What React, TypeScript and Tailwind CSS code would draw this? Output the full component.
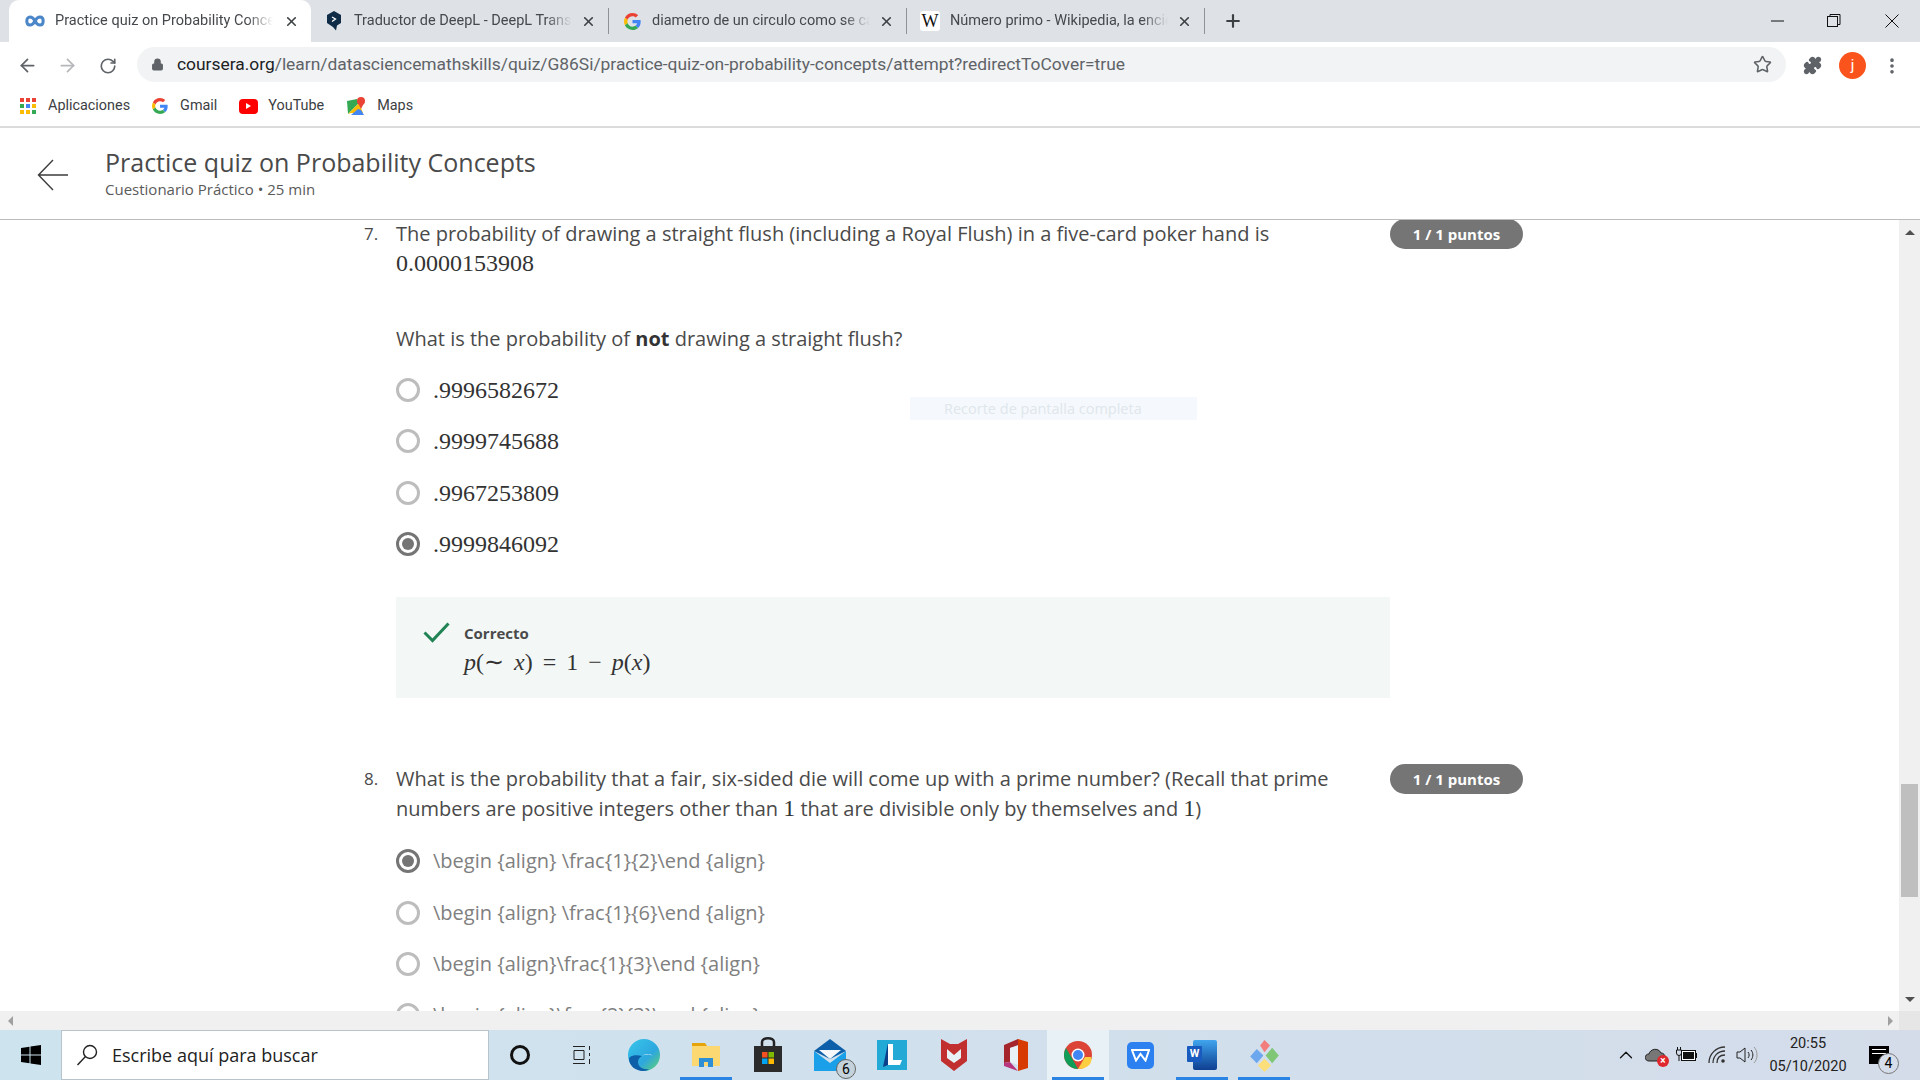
import React from 'react';
import { X, Plus, ArrowLeft, ArrowRight, RotateCw, Lock, Star, Puzzle, MoreVertical, ChevronUp } from 'lucide-react';

const GoogleIcon = ({ size = 16 }: { size?: number }) => (
  <svg width={size} height={size} viewBox="0 0 48 48">
    <path fill="#EA4335" d="M24 9.5c3.5 0 6.7 1.3 9.1 3.5l6.8-6.8C35.8 2.4 30.2 0 24 0 14.6 0 6.5 5.4 2.6 13.2l7.9 6.2C12.4 13.7 17.7 9.5 24 9.5z" />
    <path fill="#4285F4" d="M47 24.5c0-1.6-.2-3.100-.4-4.500H24v9h13c-.6 3-2.300 5.500-4.800 7.200l7.700 6C44.400 38.500 47 32.100 47 24.500z" />
    <path fill="#FBBC05" d="M10.500 28.600c-.5-1.400-.8-3-.8-4.600s.3-3.200.8-4.600l-7.900-6.200C1 16.500 0 20.100 0 24s1 7.500 2.600 10.800l7.900-6.200z" />
    <path fill="#34A853" d="M24 48c6.500 0 11.900-2.100 15.900-5.800l-7.700-6c-2.200 1.400-5 2.300-8.200 2.300-6.300 0-11.600-4.200-13.500-9.900l-7.900 6.200C6.500 42.600 14.600 48 24 48z" />
  </svg>
);

const Tab = ({ title, icon, active }: { title: string; icon: React.ReactNode; active?: boolean }) => (
  <div className={`flex items-center shrink-0 pr-[12px] ${active ? 'h-[42px] w-[302px] pl-[16px] bg-white rounded-t-[10px]' : 'h-[26px] w-[298px] pl-[13px] border-r border-[#8f9398]'}`}>
    <div className="w-[20px] flex items-center justify-center shrink-0">{icon}</div>
    <span className="ml-[10px] w-[218px] whitespace-nowrap overflow-hidden text-[14.5px] text-[#45484c] [mask-image:linear-gradient(to_right,black_88%,transparent)]">{title}</span>
    <X size={15} strokeWidth={2.6} className="ml-auto text-[#3c4043]" />
  </div>
);

const TabStrip = () => (
  <div className="h-[42px] bg-[#dee1e6] flex items-center pl-[9px] shrink-0">
    <Tab
      active
      title="Practice quiz on Probability Concepts"
      icon={
        <svg width="20" height="12" viewBox="0 0 20 12" fill="none" stroke="#4a86c8" strokeWidth="3">
          <path d="M10 6C8.500 3 7 2 5 2 3 2 1.800 3.800 1.800 6S3 10 5 10c2 0 3.500-1 5-4s3-4 5-4 3.200 1.800 3.200 4-1.200 4-3.200 4c-2 0-3.500-1-5-4z" />
        </svg>
      }
    />
    <Tab
      title="Traductor de DeepL - DeepL Translate"
      icon={
        <svg width="16" height="20" viewBox="0 0 16 20">
          <path fill="#0f2b46" d="M8 0l7 4v8l-4 2.500-1 5-3-3.500-6-4V4z" />
          <path d="M6 6l3.500 2L6 10.500" fill="none" stroke="#fff" strokeWidth="1.300" />
        </svg>
      }
    />
    <Tab title="diametro de un circulo como se calcula" icon={<GoogleIcon size={17} />} />
    <Tab
      title="Número primo - Wikipedia, la enciclopedia libre"
      icon={<span className="w-[20px] h-[20px] bg-white rounded-[3px] flex items-center justify-center font-['Liberation_Serif',serif] text-[18px] text-[#111] leading-none">W</span>}
    />
    <Plus size={20} strokeWidth={2.6} className="ml-[18px] text-[#3c4043]" />
    <div className="ml-auto flex items-center h-full text-[#111]">
      <svg width="14" height="14" viewBox="0 0 14 14" className="mr-[42px]"><path d="M0 7h13" stroke="currentColor" /></svg>
      <svg width="14" height="14" viewBox="0 0 14 14" fill="none" stroke="currentColor" className="mr-[44px]">
        <rect x="0.500" y="2.500" width="10" height="10" />
        <path d="M3 2.500V.500h10v10h-2.500" />
      </svg>
      <svg width="14" height="14" viewBox="0 0 14 14" className="mr-[21px]"><path d="M.5.5l13 13M13.500.5l-13 13" stroke="currentColor" /></svg>
    </div>
  </div>
);

const Toolbar = () => (
  <div className="h-[47px] bg-white flex items-center shrink-0">
    <ArrowLeft size={21} strokeWidth={2} className="ml-[17px] text-[#5f6368]" />
    <ArrowRight size={21} strokeWidth={2} className="ml-[19px] text-[#b5b7ba]" />
    <RotateCw size={18} strokeWidth={2.200} className="ml-[21px] text-[#5f6368]" />
    <div className="ml-[20px] w-[1649px] h-[35px] bg-[#f1f3f4] rounded-full flex items-center pl-[14px] mb-[2px]">
      <Lock size={13} fill="#5f6368" className="text-[#5f6368]" />
      <span className="ml-[13px] text-[17.400px] text-[#5f6368] whitespace-nowrap">
        <span className="text-[#202124]">coursera.org</span>/learn/datasciencemathskills/quiz/G86Si/practice-quiz-on-probability-concepts/attempt?redirectToCover=true
      </span>
      <Star size={19} strokeWidth={2} className="ml-auto mr-[14px] text-[#5f6368]" />
    </div>
    <Puzzle size={19} fill="#5f6368" className="ml-[17px] text-[#5f6368]" />
    <div className="ml-[17px] w-[27px] h-[27px] rounded-full bg-[#fa541c] text-white flex items-center justify-center text-[15px]">j</div>
    <MoreVertical size={20} strokeWidth={2.400} className="ml-[16px] text-[#5f6368]" />
  </div>
);

const appColors = ['#ea4335', '#ea4335', '#ea4335', '#34a853', '#4285f4', '#fbbc05', '#fbbc05', '#fbbc05', '#34a853'];

const Bookmarks = () => (
  <div className="h-[39px] bg-white border-b-2 border-[#dcdcdc] flex items-center pb-[3px] text-[14.400px] text-[#3c4043] shrink-0">
    <div className="ml-[20px] grid grid-cols-3 gap-[2px] w-[16px]">
      {appColors.map((c, i) => (
        <div key={i} className="w-[4px] h-[4px]" style={{ background: c }} />
      ))}
    </div>
    <span className="ml-[12px]">Aplicaciones</span>
    <div className="ml-[22px]"><GoogleIcon size={16} /></div>
    <span className="ml-[12px]">Gmail</span>
    <div className="ml-[22px] w-[19px] h-[15px] bg-[#f00] rounded-[4px] flex items-center justify-center">
      <div className="w-0 h-0 border-y-[3px] border-y-transparent border-l-[5px] border-l-white" />
    </div>
    <span className="ml-[10px]">YouTube</span>
    <svg width="19" height="20" viewBox="0 0 19 20" className="ml-[23px]">
      <path fill="#34a853" d="M0 5l10-2 2 4L1 18z" />
      <path fill="#fbbc05" d="M1 18L12 7l4 10H4z" />
      <path fill="#4285f4" d="M4 19h13l-3-5-3-1z" />
      <circle cx="14" cy="5" r="4" fill="#ea4335" />
      <path fill="#ea4335" d="M11 7l3 6 3-6z" />
    </svg>
    <span className="ml-[11px]">Maps</span>
  </div>
);

const CourseHeader = () => (
  <div className="h-[92px] bg-white border-b border-[#bdbdbd] flex items-center shrink-0 font-['Open_Sans',sans-serif] text-[#4a4a4a]">
    <svg width="32" height="36" viewBox="0 0 32 36" fill="none" stroke="#3c3c3c" strokeWidth="1.400" className="ml-[37px] mt-[3px]">
      <path d="M31 18H2M16 3L1.500 18 16 33" />
    </svg>
    <div className="ml-[36px]">
      <div className="text-[25px] leading-[32px]">Practice quiz on Probability Concepts</div>
      <div className="text-[15px] leading-[23px] text-[#5a5a5a]">Cuestionario Práctico • 25 min</div>
    </div>
  </div>
);

const Radio = ({ checked }: { checked?: boolean }) => (
  <div className={`w-[24px] h-[24px] rounded-full border-[3px] flex items-center justify-center shrink-0 ${checked ? 'border-[#757575]' : 'border-[#bdbdbd]'}`}>
    {checked && <div className="w-[12px] h-[12px] rounded-full bg-[#757575]" />}
  </div>
);

const MathOption = ({ label, checked }: { label: string; checked?: boolean }) => (
  <div className="h-[51.300px] flex items-center">
    <Radio checked={checked} />
    <span className="ml-[13px] font-['Liberation_Serif',serif] text-[24px] text-[#333] leading-none">{label}</span>
  </div>
);

const TextOption = ({ label, checked }: { label: string; checked?: boolean }) => (
  <div className="h-[51.300px] flex items-center">
    <Radio checked={checked} />
    <span className="ml-[13px] text-[20px] text-[#808080]">{label}</span>
  </div>
);

const Badge = () => (
  <div className="w-[133px] h-[30px] rounded-full bg-[#757575] text-white font-bold text-[15px] flex items-center justify-center shrink-0">1 / 1 puntos</div>
);

const Quiz = () => (
  <div className="flex-1 overflow-hidden relative">
    <div className="ml-[364px] -mt-px font-['Open_Sans',sans-serif] text-[#4a4a4a] text-[20px] leading-[30px]">
      <div className="flex">
        <div className="w-[32px] text-[17px]">7.</div>
        <div className="w-[994px]">
          <p>
            The probability of drawing a straight flush (including a Royal Flush) in a five-card poker hand is{' '}
            <span className="font-['Liberation_Serif',serif] text-[24px] leading-none text-[#333]">0.0000153908</span>
          </p>
          <p className="mt-[45px]">
            What is the probability of <b className="font-bold text-[#333]">not</b> drawing a straight flush?
          </p>
          <div className="mt-[10.400px]">
            <MathOption label=".9996582672" />
            <MathOption label=".9999745688" />
            <MathOption label=".9967253809" />
            <MathOption label=".9999846092" checked />
          </div>
          <div className="mt-[27.500px] h-[101px] bg-[#f3f8f7] flex pl-[27px] pt-[24px]">
            <svg width="27" height="21" viewBox="0 0 27 21" fill="none" stroke="#1f8354" strokeWidth="3" className="mt-[1px]">
              <path d="M1.500 10.500L9.500 18.500 25.500 1.500" />
            </svg>
            <div className="ml-[14px]">
              <div className="text-[15px] leading-[24px] font-bold text-[#4a4a4a]">Correcto</div>
              <div className="font-['Liberation_Serif',serif] text-[24px] leading-[34px] text-[#333] whitespace-nowrap [word-spacing:4px]">
                <i>p</i>(∼ <i>x</i>) = 1 − <i>p</i>(<i>x</i>)
              </div>
            </div>
          </div>
        </div>
        <Badge />
      </div>

      <div className="flex mt-[66px]">
        <div className="w-[32px] text-[17px]">8.</div>
        <div className="w-[994px]">
          <p>
            What is the probability that a fair, six-sided die will come up with a prime number? (Recall that prime numbers are positive integers other than{' '}
            <span className="font-['Liberation_Serif',serif] text-[24px] leading-none text-[#333]">1</span> that are divisible only by themselves and{' '}
            <span className="font-['Liberation_Serif',serif] text-[24px] leading-none text-[#333]">1</span>)
          </p>
          <div className="mt-[11.500px]">
            <TextOption label="\begin {align} \frac{1}{2}\end {align}" checked />
            <TextOption label="\begin {align} \frac{1}{6}\end {align}" />
            <TextOption label="\begin {align}\frac{1}{3}\end {align}" />
            <TextOption label="\begin {align}\frac{2}{3}\end {align}" />
          </div>
        </div>
        <Badge />
      </div>
    </div>
    {/* snipping tool toast fading out over the page */}
    <div className="absolute left-[910px] top-[177px] w-[287px] h-[23px] bg-[#f5f9fd] text-[#dfe6ec] text-[14.500px] flex items-center pl-[34px] font-['Open_Sans',sans-serif]">Recorte de pantalla completa</div>
  </div>
);

const VerticalScrollbar = () => (
  <div className="w-[21px] bg-[#f0f0f0] flex flex-col items-center shrink-0 pt-[10px] pb-[9px]">
    <div className="w-0 h-0 border-x-[5px] border-x-transparent border-b-[5px] border-b-[#505050]" />
    <div className="w-[17px] h-[113px] bg-[#bfbfbf] mt-[549px]" />
    <div className="mt-auto w-0 h-0 border-x-[5px] border-x-transparent border-t-[5px] border-t-[#505050]" />
  </div>
);

const HorizontalScrollbar = () => (
  <div className="h-[19px] bg-[#f0f0f0] flex items-center shrink-0">
    <div className="ml-[8px] w-0 h-0 border-y-[5px] border-y-transparent border-r-[5px] border-r-[#a0a0a0]" />
    <div className="ml-auto mr-[6px] w-0 h-0 border-y-[5px] border-y-transparent border-l-[5px] border-l-[#a0a0a0]" />
    <div className="w-[21px] h-full bg-[#e6e6e6]" />
  </div>
);

const Slot = ({ children, running, active }: { children: React.ReactNode; running?: boolean; active?: boolean }) => (
  <div className={`w-[62px] h-[50px] flex items-center justify-center relative shrink-0 ${active ? 'bg-[#e8f2f6]' : ''}`}>
    {children}
    {running && <div className="absolute bottom-0 left-[5px] right-[5px] h-[3px] bg-[#2a84e4]" />}
  </div>
);

const Taskbar = () => (
  <div className="h-[50px] bg-gradient-to-r from-[#cde4ee] to-[#d4dcea] flex items-center shrink-0 font-['Roboto',sans-serif]">
    <div className="w-[61px] flex justify-center">
      <svg width="20" height="20" viewBox="0 0 20 20" fill="#000">
        <path d="M0 3l8.500-1.200V9.500H0zM9.500 1.600L20 0v9.500H9.500zM0 10.500h8.500v7.700L0 17zM9.500 10.500H20V20L9.500 18.400z" />
      </svg>
    </div>
    <div className="w-[428px] h-[50px] bg-white border border-[#b8c4cc] flex items-center pl-[14px] text-[#222]">
      <svg width="22" height="22" viewBox="0 0 22 22" fill="none" stroke="#222" strokeWidth="1.400">
        <circle cx="14" cy="8" r="6.500" />
        <path d="M9.500 12.500L1.500 21" />
      </svg>
      <span className="ml-[14px] font-['Open_Sans',sans-serif] text-[18px]">Escribe aquí para buscar</span>
    </div>
    <Slot><div className="w-[20px] h-[20px] rounded-full border-[3px] border-[#111]" /></Slot>
    <Slot>
      <svg width="20" height="20" viewBox="0 0 20 20" fill="none" stroke="#222">
        <path d="M1 1.500h12M1 18.500h12M2 5.500h10v9H2zM17.500 1v4M17.500 8v3M17.500 14v5" />
      </svg>
    </Slot>
    <Slot>
      <svg width="32" height="32" viewBox="0 0 32 32">
        <defs>
          <linearGradient id="edge" x1="0" y1="0" x2="1" y2="1">
            <stop offset="0" stopColor="#36c6ea" />
            <stop offset="0.600" stopColor="#2ea7de" />
            <stop offset="1" stopColor="#62d46b" />
          </linearGradient>
        </defs>
        <circle cx="16" cy="16" r="16" fill="url(#edge)" />
        <path fill="#0c5fa8" d="M1 20c0 7 7 12 14 12 3 0 5-1 6-2-6 1-11-2-11-7 0-3 2-5 4-6-7-2-13 0-13 3z" />
        <path fill="#fff" opacity="0.900" d="M14 17c3-2 8-2 11 0-2-2-7-3-11 0z" />
      </svg>
    </Slot>
    <Slot running>
      <svg width="30" height="30" viewBox="0 0 30 30">
        <path fill="#e5a50a" d="M1 3h13l2 3H1z" />
        <path fill="#fcd873" d="M1 6h28v20H1z" />
        <path fill="#2d8fd5" d="M8 27v-9h14v9h-5v-5h-4v5z" />
      </svg>
    </Slot>
    <Slot>
      <svg width="30" height="36" viewBox="0 0 30 36">
        <path d="M9 9V5c0-5 12-5 12 0v4" fill="none" stroke="#222" strokeWidth="2.500" />
        <path fill="#2b2b2b" d="M1 9h28v26H1z" />
        <path fill="#f25022" d="M9 15h5.500v5.500H9z" />
        <path fill="#7fba00" d="M15.500 15H21v5.500h-5.500z" />
        <path fill="#00a4ef" d="M9 21.500h5.500V27H9z" />
        <path fill="#ffb900" d="M15.500 21.500H21V27h-5.500z" />
      </svg>
    </Slot>
    <Slot>
      <div className="relative w-[32px] h-[32px]">
        <svg width="32" height="32" viewBox="0 0 32 32">
          <path fill="#1aa0e8" d="M0 12v20h32V12L16 24z" />
          <path fill="#0c5fa8" d="M0 12L16 0l16 12-16 8z" />
          <path fill="#f4f8fb" d="M5 11h22l-11 9z" />
        </svg>
        <div className="absolute -right-[10px] -bottom-[8px] w-[20px] h-[20px] rounded-full bg-[#c4d3db] border border-[#666] text-[14px] text-black flex items-center justify-center">6</div>
      </div>
    </Slot>
    <Slot>
      <div className="w-[30px] h-[30px] bg-[#22a9d6] flex items-center justify-center relative">
        <svg width="30" height="30" viewBox="0 0 30 30">
          <path fill="#0b3f8a" d="M6 27L11 3v22z" />
          <path fill="#fff" d="M11 4h5v16h9l-2 5H11z" />
        </svg>
      </div>
    </Slot>
    <Slot>
      <svg width="26" height="32" viewBox="0 0 26 32">
        <path fill="#c1302e" d="M0 0l9 5h8l9-5v22L13 32 0 22z" />
        <path fill="#e8f1f5" d="M6 10l7 6 7-6v9l-7 5-7-5z" />
      </svg>
    </Slot>
    <Slot>
      <svg width="24" height="32" viewBox="0 0 24 32">
        <path fill="#d83b01" d="M14 0l10 3v26l-10 3z" />
        <path fill="#a4262c" d="M0 6l14-6v6L6 9v14l-6 1z" />
        <path fill="#b7367d" d="M0 24l6-1 8 9-14-5z" />
        <path fill="#e8f1f5" d="M6 9l8-2v19l-8-3z" />
      </svg>
    </Slot>
    <Slot running active>
      <svg width="28" height="28" viewBox="0 0 28 28">
        <circle cx="14" cy="14" r="14" fill="#db4437" />
        <path fill="#0f9d58" d="M2 7l7 12 5 9C6 28 0 21 0 14c0-3 1-5 2-7z" />
        <path fill="#ffcd40" d="M14 28l7-12h6c2 6-3 12-13 12z" />
        <circle cx="14" cy="14" r="6.500" fill="#fff" />
        <circle cx="14" cy="14" r="5" fill="#4285f4" />
      </svg>
    </Slot>
    <Slot>
      <div className="w-[27px] h-[27px] rounded-[5px] bg-[#2d80f0] flex items-center justify-center">
        <svg width="19" height="13" viewBox="0 0 19 13" fill="none" stroke="#fff" strokeWidth="2">
          <path d="M1 1h17l-3.500 10.500L9.500 5 5 11.500z" />
        </svg>
      </div>
    </Slot>
    <Slot running>
      <div className="relative w-[30px] h-[30px]">
        <div className="absolute right-0 top-0 w-[24px] h-[30px] rounded-[2px] bg-gradient-to-b from-[#41a5ee] to-[#103f91]" />
        <div className="absolute left-0 top-[6px] w-[15px] h-[16px] bg-[#185abd] rounded-[1px] text-white text-[11px] font-bold flex items-center justify-center">W</div>
      </div>
    </Slot>
    <Slot running>
      <svg width="33" height="33" viewBox="0 0 30 30">
        <path fill="#f27d7d" d="M15 1l5 5-5 6-4-6z" />
        <path fill="#6da7ee" d="M8 9l6 6-6 7-6-6z" />
        <path fill="#7fc676" d="M22 8l6 7-6 7-6-7z" />
        <path fill="#fcdf7a" d="M15 18l6 6-6 6-6-6z" />
      </svg>
    </Slot>
    <div className="ml-auto flex items-center">
      <ChevronUp size={22} strokeWidth={1.400} className="text-[#111] mr-[8px]" />
      <div className="relative w-[22px] h-[18px] mr-[8px]">
        <svg width="22" height="16" viewBox="0 0 22 16"><path fill="#777" stroke="#222" d="M4 15C-1 15-1 8 4 8c1-5 9-7 12-1 5 0 6 8 0 8z" /></svg>
        <div className="absolute -right-[2px] -bottom-[3px] w-[12px] h-[12px] rounded-full bg-[#e0272e] text-white text-[10px] leading-none font-bold flex items-center justify-center">×</div>
      </div>
      {/* battery on charge */}
      <svg width="22" height="16" viewBox="0 0 22 16" className="mr-[11px]">
        <path d="M2.500 0v3M5.500 0v3M1.500 3h5v3a2.500 2.500 0 01-5 0zM4 8.500V14" stroke="#111" fill="none" />
        <rect x="6.500" y="3.500" width="14" height="10" fill="#fff" stroke="#111" />
        <rect x="8" y="5" width="11" height="7" fill="#111" />
        <rect x="21" y="6" width="1" height="5" fill="#111" />
      </svg>
      {/* wifi fan, signal grows up and to the right */}
      <svg width="20" height="18" viewBox="0 0 20 18" fill="none" stroke="#333" strokeWidth="1.300" className="mr-[8px]">
        <path d="M1 17C1 8 8 1 17 1" stroke="#333" />
        <path d="M5 17C5 10 10 5 17 5" />
        <path d="M9 17C9 12 12 9 17 9" />
        <circle cx="15" cy="15" r="1.800" fill="#333" stroke="none" />
      </svg>
      <svg width="22" height="18" viewBox="0 0 22 18" fill="none" stroke="#222" className="mr-[10px]">
        <path d="M1 6h3l5-4v14l-5-4H1zM12 6c1.500 2 1.500 4 0 6M15 4c2.500 3 2.500 7 0 10" />
        <path d="M18 1c4 4 4 12 0 16" stroke="#999" />
      </svg>
      <div className="w-[80px] text-center text-[14.500px] leading-[23px] text-[#222]">
        <div>20:55</div>
        <div>05/10/2020</div>
      </div>
      <div className="relative w-[20px] h-[18px] ml-[21px] mr-[31px] bg-black">
        <div className="mx-[3px] mt-[3px] border-y border-white h-[5px]" />
        <div className="absolute -right-[10px] -bottom-[10px] w-[21px] h-[21px] rounded-full bg-[#d5deea] border border-[#777] text-[14px] text-black flex items-center justify-center">4</div>
      </div>
    </div>
  </div>
);

export default function App() {
  return (
    <div className="w-[1920px] h-[1080px] flex flex-col overflow-hidden bg-white font-['Roboto',sans-serif]">
      <TabStrip />
      <Toolbar />
      <Bookmarks />
      <CourseHeader />
      <div className="flex-1 min-h-0 flex">
        <Quiz />
        <VerticalScrollbar />
      </div>
      <HorizontalScrollbar />
      <Taskbar />
    </div>
  );
}
